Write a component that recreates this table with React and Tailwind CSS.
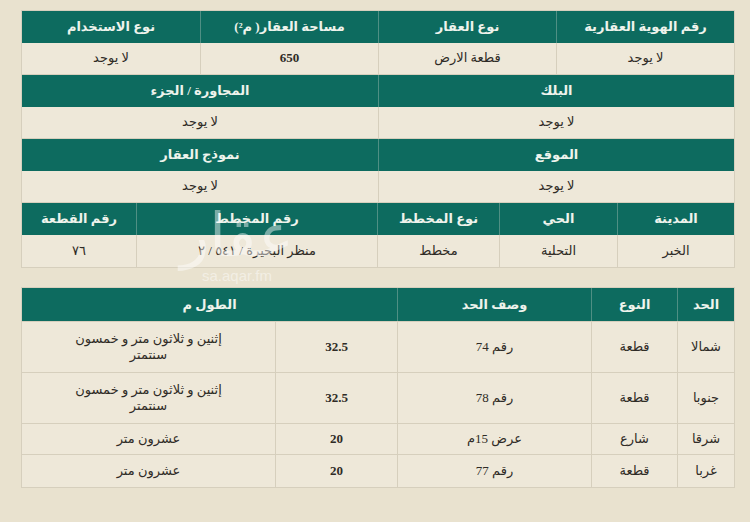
import React from "react";

const font = { fontFamily: '"Liberation Serif", "DejaVu Sans", serif' };

const Head = ({ children, className = "" }) => (
	<div className={`flex items-center justify-center bg-[#0d6b5f] text-[#eef3ec] text-[13px] font-bold border-l border-[#4f8f84] last:border-l-0 ${className}`}>
		{children}
	</div>
);

const Cell = ({ children, className = "" }) => (
	<div className={`flex items-center justify-center text-center bg-[#eee8d9] text-[#2f2b26] text-[13px] border-l border-[#d6cfbd] last:border-l-0 leading-tight ${className}`}>
		{children}
	</div>
);

const twoLines = (
	<span>
		إثنين و ثلاثون متر و خمسون
		<br />
		سنتمتر
	</span>
);

const borders = [
	["شمالا", "قطعة", "رقم 74", "32.5", twoLines, "h-[51px]"],
	["جنوبا", "قطعة", "رقم 78", "32.5", twoLines, "h-[51px]"],
	["شرقا", "شارع", "عرض 15م", "20", "عشرون متر", "h-[31px]"],
	["غربا", "قطعة", "رقم 77", "20", "عشرون متر", "h-[33px]"],
];

const App = () => {
	return (
		<div dir="rtl" style={font} className="relative w-[750px] h-[522px] bg-[#e9e2cf] overflow-hidden">
			<div className="absolute top-[10px] right-[15px] w-[714px] flex flex-col border border-[#d6cfbd]">
				<div className="grid grid-cols-4 h-8">
					<Head>رقم الهوية العقارية</Head>
					<Head>نوع العقار</Head>
					<Head>مساحة العقار( م²)</Head>
					<Head>نوع الاستخدام</Head>
				</div>
				<div className="grid grid-cols-4 h-8 border-b border-[#d6cfbd]">
					<Cell>لا يوجد</Cell>
					<Cell>قطعة الارض</Cell>
					<Cell className="font-bold">650</Cell>
					<Cell>لا يوجد</Cell>
				</div>
				<div className="grid grid-cols-2 h-8">
					<Head>البلك</Head>
					<Head>المجاورة / الجزء</Head>
				</div>
				<div className="grid grid-cols-2 h-8 border-b border-[#d6cfbd]">
					<Cell>لا يوجد</Cell>
					<Cell>لا يوجد</Cell>
				</div>
				<div className="grid grid-cols-2 h-8">
					<Head>الموقع</Head>
					<Head>نموذج العقار</Head>
				</div>
				<div className="grid grid-cols-2 h-8 border-b border-[#d6cfbd]">
					<Cell>لا يوجد</Cell>
					<Cell>لا يوجد</Cell>
				</div>
				<div className="grid grid-cols-[117px_118px_122px_241px_1fr] h-8">
					<Head>المدينة</Head>
					<Head>الحي</Head>
					<Head>نوع المخطط</Head>
					<Head>رقم المخطط</Head>
					<Head>رقم القطعة</Head>
				</div>
				<div className="grid grid-cols-[117px_118px_122px_241px_1fr] h-8">
					<Cell>الخبر</Cell>
					<Cell>التحلية</Cell>
					<Cell>مخطط</Cell>
					<Cell>منظر البحيرة / ٥٤١ / ٢</Cell>
					<Cell>٧٦</Cell>
				</div>
			</div>

			<div className="absolute top-[287px] right-[15px] w-[714px] flex flex-col border border-[#d6cfbd]">
				<div className="grid grid-cols-[57px_86px_194px_1fr] h-[33px]">
					<Head>الحد</Head>
					<Head>النوع</Head>
					<Head>وصف الحد</Head>
					<Head>الطول م</Head>
				</div>
				{borders.map(([side, kind, desc, len, words, h]) => (
					<div key={side} className={`grid grid-cols-[57px_86px_194px_122px_1fr] border-t border-[#d6cfbd] ${h}`}>
						<Cell>{side}</Cell>
						<Cell>{kind}</Cell>
						<Cell>{desc}</Cell>
						<Cell className="font-bold">{len}</Cell>
						<Cell>{words}</Cell>
					</div>
				))}
			</div>

			<div dir="ltr" className="absolute left-[172px] top-[202px] w-[130px] flex flex-col items-center text-white/45 pointer-events-none">
				<span className="text-[60px] leading-[66px]" style={{ fontFamily: '"DejaVu Sans", sans-serif' }}>عقار</span>
				<span className="text-[15px] leading-4" style={{ fontFamily: '"Liberation Sans", sans-serif' }}>sa.aqar.fm</span>
			</div>
		</div>
	);
};

export default App;
